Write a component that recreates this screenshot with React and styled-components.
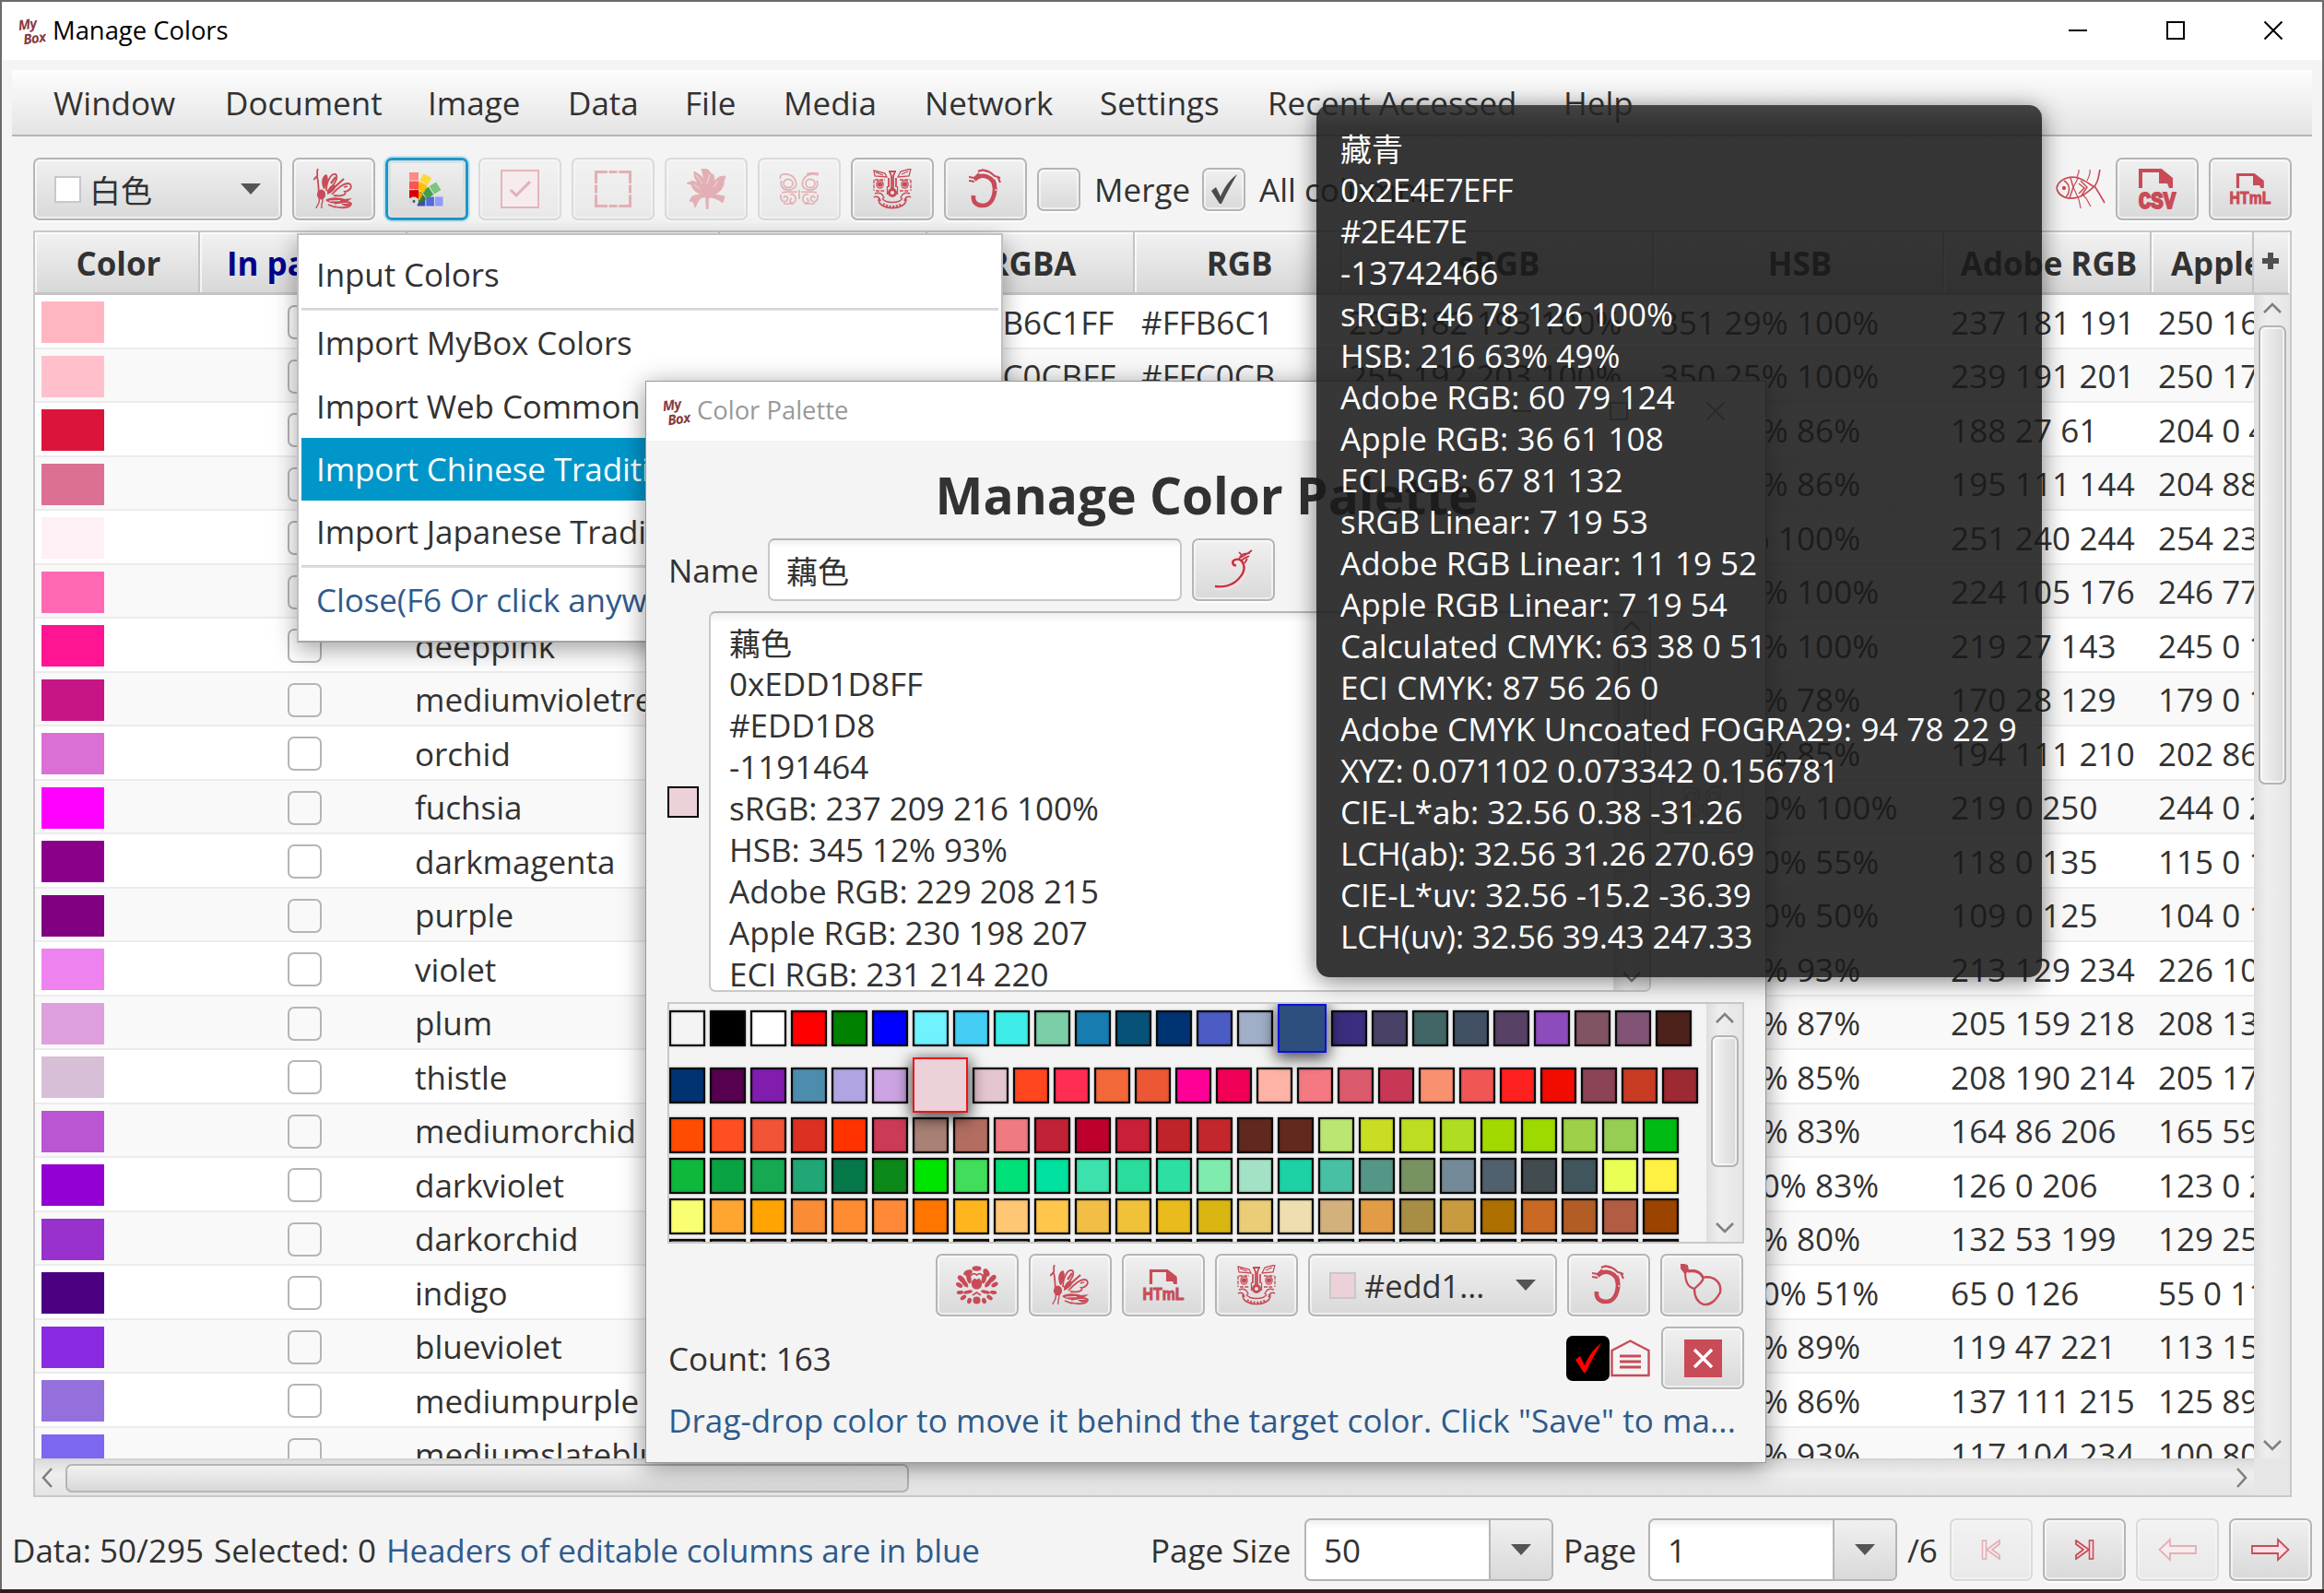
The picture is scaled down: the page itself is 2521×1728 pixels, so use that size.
import React from 'react';
import styled, { createGlobalStyle, css } from 'styled-components';

const INK = '#323232';
const RED = '#c84b57';
const LINK = '#2e5a8c';
const EDGE = '#b5b5b5';
const FONT = `'Open Sans', 'Noto Sans CJK SC', sans-serif`;

const GlobalStyle = createGlobalStyle`
  * { box-sizing: border-box; }
  body {
    margin: 0;
    overflow: hidden;
    font-family: ${FONT};
    font-size: 35px;
    line-height: 46px;
    color: ${INK};
  }
`;

/* ---------- frame ---------- */

const Desktop = styled.div`
  position: relative;
  width: 2521px;
  height: 1728px;
  padding: 2px 2px 4px;
  overflow: hidden;
  background: linear-gradient(to bottom, #6c6a6a 1724px, #35171c 1724px);
`;

const MainWindow = styled.div`
  width: 2517px;
  height: 1722px;
  display: flex;
  flex-direction: column;
  background: #f4f4f4;
`;

const TitleBar = styled.header`
  flex: none;
  height: ${(p) => p.$h}px;
  padding-left: 17px;
  padding-bottom: 1px;
  display: flex;
  align-items: center;
  background: #fff;
  font-size: 27.4px;
  color: ${(p) => p.$color};
`;

const TitleText = styled.span`
  margin-left: 7px;
  padding-bottom: 1px;
  flex: 1;
`;

const LogoBox = styled.span`
  width: 31px;
  display: flex;
  flex-direction: column;
  align-items: center;
  font: italic 700 15px/16px 'Open Sans', sans-serif;
  letter-spacing: -0.6px;
  color: #8a3a40;
  transform: rotate(-8deg);
`;

const LogoTop = styled.span`
  margin-left: -8px;
`;

const LogoBottom = styled.span`
  margin-left: 3px;
`;

const WindowButtons = styled.span`
  display: flex;
  gap: ${(p) => p.$gap}px;
  padding-right: ${(p) => p.$end}px;
`;

const MenuBar = styled.nav`
  flex: none;
  height: 72px;
  margin: 11px 11px 0;
  padding: 2px 0 0 45px;
  display: flex;
  align-items: center;
  background: linear-gradient(#fdfdfd, #e4e4e4);
  border-bottom: 2px solid ${EDGE};
`;

const MenuTitle = styled.span`
  width: ${(p) => p.$w}px;
  white-space: nowrap;
`;

/* ---------- controls ---------- */

const raised = css`
  border: 2px solid ${EDGE};
  border-radius: 7px;
  background: linear-gradient(#f0f0f0, #d9d9d9);
  box-shadow: inset 0 0 0 2px rgba(255, 255, 255, 0.55), 0 2px 0 rgba(255, 255, 255, 0.8);
`;

const IconButton = styled.button`
  ${raised}
  flex: none;
  width: 90px;
  height: 68px;
  padding: 0;
  display: flex;
  align-items: center;
  justify-content: center;
  opacity: ${(p) => (p.$off ? 0.4 : 1)};
  ${(p) =>
    p.$focus &&
    css`
      border: 3px solid #1f98c6;
      box-shadow: 0 0 0 2px #bfe3f1, inset 0 0 0 3px #d9dfe2;
    `}
`;

const ColorCombo = styled.div`
  ${raised}
  flex: none;
  width: 270px;
  height: 68px;
  padding: 0 20px 0 21px;
  display: flex;
  align-items: center;
`;

const ComboSwatch = styled.span`
  width: 29px;
  height: 29px;
  border: 2px solid #c8c8c8;
  background: ${(p) => p.$c};
`;

const ComboText = styled.span`
  flex: 1;
  margin-left: 9px;
  padding-top: ${(p) => p.$drop || 1}px;
  font-size: ${(p) => p.$size || 34.4}px;
`;

const CheckBox = styled.span`
  ${raised}
  flex: none;
  width: 47px;
  height: 47px;
  display: flex;
  align-items: center;
  justify-content: center;
`;

const Toolbar = styled.div`
  flex: none;
  height: 68px;
  margin: 23px 33px 11px 34px;
  display: flex;
  align-items: center;
  gap: 11px;
`;

const ToolLabel = styled.span`
  width: ${(p) => p.$w}px;
  padding-left: 4px;
  padding-top: 1px;
  white-space: nowrap;
`;

const Push = styled.span`
  flex: 1;
`;

/* ---------- table ---------- */

const COLS = '179px 225px 339px 225px 225px 225px 338px 315px 225px 111px';

const Table = styled.section`
  flex: none;
  height: 1374px;
  margin: 0 33px 0 34px;
  border: 2px solid #c8c8c8;
  display: grid;
  grid-template-columns: 2407px 39px;
  grid-template-rows: 68px 1262px 40px;
`;

const HeadRow = styled.div`
  display: grid;
  grid-template-columns: ${COLS};
  border-bottom: 3px solid #c4c4c4;
  overflow: hidden;
`;

const HeadCell = styled.div`
  display: flex;
  align-items: center;
  justify-content: ${(p) => (p.$start ? 'flex-start' : 'center')};
  padding-top: 3px;
  padding-left: ${(p) => (p.$start ? 21 : 4)}px;
  overflow: hidden;
  white-space: nowrap;
  font-weight: 700;
  font-size: 34.9px;
  color: ${(p) => (p.$edit ? '#00008b' : INK)};
  background: linear-gradient(#f2f2f2, #d8d8d8);
  border-right: 2px solid #c4c4c4;
  box-shadow: inset 2px 2px 0 rgba(255, 255, 255, 0.7);
`;

const PlusCell = styled.div`
  display: flex;
  align-items: center;
  justify-content: center;
  padding: 0 2px 4px 0;
  background: linear-gradient(#f2f2f2, #d8d8d8);
  border-right: 2px solid #fafafa;
  border-bottom: 3px solid #c4c4c4;
`;

const Rows = styled.div`
  overflow: hidden;
`;

const Row = styled.div`
  height: 58.5px;
  padding-top: 3px;
  display: grid;
  grid-template-columns: ${COLS};
  align-items: center;
  background: ${(p) => (p.$alt ? '#f9f9f9' : '#fff')};
  border-bottom: 2px solid #ececec;
`;

const Cell = styled.span`
  padding-left: ${(p) => p.$pad || 7}px;
  overflow: hidden;
  white-space: nowrap;
  letter-spacing: ${(p) => p.$ls || 0}px;
`;

const RowSwatch = styled.span`
  width: 68px;
  height: 45px;
  margin-left: 7px;
  background: ${(p) => p.$c};
`;

const RowCheck = styled.span`
  width: 37px;
  height: 37px;
  margin-left: 2px;
  justify-self: center;
  border: 2px solid ${EDGE};
  border-radius: 7px;
`;

/* ---------- scroll bars ---------- */

const VTrack = styled.div`
  width: ${(p) => p.$w || 39}px;
  display: flex;
  flex-direction: column;
  align-items: center;
  justify-content: space-between;
  padding: ${(p) => p.$pad || '8px 0'};
  background: linear-gradient(to right, #dedede, #eeeeee 35%, #e6e6e6);
`;

const VThumb = styled.div`
  width: 30px;
  height: ${(p) => p.$h}px;
  margin-top: ${(p) => p.$top}px;
  margin-bottom: auto;
  border: 2px solid #b4b4b4;
  border-radius: 7px;
  background: linear-gradient(to right, #f3f3f3, #d9d9d9);
  box-shadow: inset 0 0 0 2px rgba(255, 255, 255, 0.6);
`;

const HTrack = styled.div`
  display: flex;
  align-items: center;
  justify-content: space-between;
  padding: 0 7px;
  border-top: 2px solid #d4d4d4;
  background: linear-gradient(#dcdcdc, #eeeeee 40%, #e4e4e4);
`;

const HThumb = styled.div`
  width: 915px;
  height: 31px;
  margin-left: 13px;
  margin-right: auto;
  border: 2px solid #b4b4b4;
  border-radius: 7px;
  background: linear-gradient(#f2f2f2, #d8d8d8);
`;

const Corner = styled.div`
  background: #e6e6e6;
`;

/* ---------- status bar ---------- */

const StatusBar = styled.footer`
  height: 68px;
  margin: 23px 11px 0 11px;
  display: flex;
  align-items: center;
  gap: 11px;
  white-space: nowrap;
`;

const StatusText = styled.span`
  width: ${(p) => p.$w}px;
  padding-top: 2px;
  letter-spacing: ${(p) => (p.$link ? -0.15 : 0)}px;
  color: ${(p) => (p.$link ? LINK : INK)};
`;

const EditCombo = styled.div`
  flex: none;
  width: 270px;
  height: 68px;
  display: flex;
  border: 2px solid ${EDGE};
  border-radius: 7px;
  overflow: hidden;
  background: linear-gradient(#f0f0f0, #ffffff 10px);
`;

const EditComboText = styled.span`
  flex: 1;
  padding-left: 19px;
  line-height: 66px;
`;

const EditComboButton = styled.span`
  width: 68px;
  display: flex;
  align-items: center;
  justify-content: center;
  border-left: 2px solid ${EDGE};
  background: linear-gradient(#f0f0f0, #d9d9d9);
`;

/* ---------- popup menu ---------- */

const Popup = styled.div`
  position: absolute;
  left: 322px;
  top: 253px;
  width: 766px;
  height: 444px;
  padding: 9px 3px;
  border: 2px solid #c0c0c0;
  border-bottom-color: #a4a4a4;
  background: #fff;
  box-shadow: 0 8px 24px rgba(0, 0, 0, 0.35);
`;

const PopupItem = styled.div`
  height: 68.3px;
  padding-left: 16px;
  line-height: 68px;
  white-space: nowrap;
  letter-spacing: -0.1px;
  color: ${(p) => (p.$on ? '#fff' : p.$link ? LINK : INK)};
  background: ${(p) => (p.$on ? '#0096c9' : 'transparent')};
`;

const PopupLine = styled.div`
  height: 3px;
  margin: 2px 0 1px;
  border-top: 1px solid #d0d0d0;
  background: #dedede;
`;

/* ---------- dialog ---------- */

const Dialog = styled.div`
  position: absolute;
  left: 700px;
  top: 413px;
  width: 1216px;
  height: 1174px;
  border: 1px solid #9a9a9a;
  background: #f4f4f4;
  box-shadow: 0 5px 26px rgba(0, 0, 0, 0.42);
`;

const DialogBody = styled.div`
  padding: 10px 23px 0;
  display: flex;
  flex-direction: column;
`;

const Heading = styled.h1`
  height: 96px;
  margin: 0;
  padding-left: 2px;
  text-align: center;
  font-size: 55px;
  font-weight: 700;
  line-height: 97px;
`;

const Line = styled.div`
  display: flex;
  align-items: center;
  justify-content: ${(p) => (p.$end ? 'flex-end' : 'flex-start')};
  gap: 11px;
  margin-right: ${(p) => (p.$end ? 1 : 0)}px;
  margin-bottom: 11px;
`;

const NameLabel = styled.span`
  width: 98px;
  padding: 2px 0 0 1px;
`;

const Input = styled.div`
  width: 449px;
  height: 68px;
  padding-left: 18px;
  line-height: 68px;
  font-size: 34px;
  border: 2px solid #c8c8c8;
  border-top-color: ${EDGE};
  border-radius: 7px;
  background: linear-gradient(#efefef, #fff 8px);
`;

const CurrentSwatch = styled.span`
  flex: none;
  width: 34px;
  height: 34px;
  border: 2px solid #000;
  background: #edd1d8;
`;

const TextArea = styled.div`
  width: 1022px;
  height: 413px;
  display: flex;
  border: 2px solid #c8c8c8;
  border-top-color: ${EDGE};
  border-radius: 7px;
  overflow: hidden;
  background: linear-gradient(#efefef, #fff 10px);
`;

const TextLines = styled.div`
  flex: 1;
  padding: 9px 0 0 20px;
`;

const TextLine = styled.div`
  height: 45px;
  line-height: ${(p) => (p.$cjk ? 48 : 45)}px;
  white-space: pre;
  font-size: ${(p) => (p.$cjk ? 34 : 35)}px;
  letter-spacing: ${(p) => p.$ls || 0}px;
`;

const PalettePane = styled.div`
  height: 262px;
  margin-bottom: 11px;
  display: flex;
  border: 2px solid #c8c8c8;
  overflow: hidden;
`;

const PaletteGrid = styled.div`
  flex: 1;
  display: flex;
  flex-direction: column;
  gap: 5px;
`;

const PaletteRow = styled.div`
  flex: none;
  display: flex;
  align-items: center;
  gap: 5px;
`;

const PaletteCell = styled.span`
  position: relative;
  flex: none;
  width: ${(p) => p.$s || 39}px;
  height: ${(p) => p.$s || 39}px;
  border: 2px solid ${(p) => p.$edge || '#0a0a0a'};
  background: ${(p) => p.$c};
  box-shadow: ${(p) =>
    p.$s ? '0 4px 16px 2px rgba(0, 0, 0, 0.7)' : 'inset 0 0 2px rgba(0, 0, 0, 0.6), 0 0 2px rgba(0, 0, 0, 0.5)'};
  z-index: ${(p) => (p.$s ? 1 : 0)};
`;

const FooterLine = styled.div`
  display: flex;
  align-items: center;
  height: 68px;
`;

const CountText = styled.span`
  padding: 2px 0 0 1px;
`;

const BlackCheck = styled.span`
  width: 47px;
  height: 49px;
  border-radius: 7px;
  background: #000;
  display: flex;
  align-items: center;
  justify-content: center;
`;

const HouseSlot = styled.span`
  display: flex;
  margin: 0 12px 0 1px;
`;

const Message = styled.div`
  margin-top: 11px;
  padding-left: 1px;
  white-space: nowrap;
  color: ${LINK};
  letter-spacing: 0.08px;
`;

/* ---------- tooltip ---------- */

const Tooltip = styled.div`
  position: absolute;
  left: 1428px;
  top: 114px;
  width: 787px;
  height: 946px;
  padding: 24px 26px;
  border-radius: 14px;
  color: #fff;
  background: linear-gradient(rgba(42, 42, 42, 0.87), rgba(25, 25, 25, 0.87) 24px);
  box-shadow: 0 4px 26px rgba(0, 0, 0, 0.5);
`;

/* ---------- icons ---------- */

const Svg = ({ w = 44, h = 44, vb, children, ...rest }) => (
  <svg width={w} height={h} viewBox={vb || `0 0 ${w} ${h}`} fill="none" {...rest}>
    {children}
  </svg>
);

const Logo = () => (
  <LogoBox>
    <LogoTop>My</LogoTop>
    <LogoBottom>Box</LogoBottom>
  </LogoBox>
);

const ChevronSvg = styled.svg`
  flex: none;
`;

const Chevron = ({ dir = 'up' }) => {
  const d = {
    up: 'M2 11 L11 2 L20 11',
    down: 'M2 2 L11 11 L20 2',
    left: 'M11 2 L2 12 L11 22',
    right: 'M2 2 L11 12 L2 22',
  }[dir];
  const flat = dir === 'up' || dir === 'down';
  const w = flat ? 22 : 13;
  const h = flat ? 13 : 24;
  return (
    <ChevronSvg width={w} height={h} viewBox={`0 0 ${w} ${h}`} fill="none">
      <path d={d} stroke="#808080" strokeWidth="2.6" />
    </ChevronSvg>
  );
};

const Triangle = () => (
  <Svg w={24} h={14}>
    <path d="M1 1 H23 L12 13 Z" fill="#545454" />
  </Svg>
);

const Tick = ({ color = '#4c4c4c' }) => (
  <Svg w={34} h={36}>
    <path d="M3 20 L8 16 L13 26 C18 14 24 7 31 2 C25 13 19 23 14 34 H12 Z" fill={color} />
  </Svg>
);

const Minimize = ({ color = '#000' }) => (
  <Svg w={22} h={22}>
    <path d="M1 11 H21" stroke={color} strokeWidth="2" />
  </Svg>
);
const Maximize = ({ color = '#000' }) => (
  <Svg w={22} h={22}>
    <rect x="2" y="2" width="18" height="18" stroke={color} strokeWidth="2" />
  </Svg>
);
const CloseX = ({ color = '#000' }) => (
  <Svg w={22} h={22}>
    <path d="M1.5 1.5 L20.5 20.5 M20.5 1.5 L1.5 20.5" stroke={color} strokeWidth="2" />
  </Svg>
);

const Peacock = () => (
  <Svg>
    <path d="M5 0 C3 3 5 6 4 8 L0 12 M4 9 C6 15 5 20 6 26" stroke={RED} strokeWidth="1.8" />
    <ellipse cx="8.5" cy="28" rx="4.6" ry="5.4" fill={RED} />
    <path d="M6 32 C8 37 3 40 3 43 M10 33 C10 37 8 40 9 43" stroke={RED} strokeWidth="1.4" />
    <path d="M11 22 C7 14 10 7 14 6 C17 9 16 16 12 22 Z" fill={RED} />
    <path d="M14 24 C14 14 19 5 24 6 C28 9 22 19 15 25" stroke={RED} strokeWidth="1.8" />
    <path d="M15 26 C16 19 21 16 24 18 C25 22 20 26 15 28 Z" fill={RED} />
    <path d="M23 20 L33 11 M19 16 L24 9" stroke={RED} strokeWidth="2.2" />
    <path d="M20 28 C25 22 35 13 40 17 C43 21 37 25 34 25 C37 29 28 30 22 29" stroke={RED} strokeWidth="1.8" />
    <path d="M33 20 L37 19" stroke={RED} strokeWidth="1.8" />
    <path d="M13 34 C18 30 28 31 34 33 L42 32 L36 36 C28 38 18 39 13 34 Z" fill={RED} />
    <path d="M23 38 C30 36 38 35 41 38 C40 43 30 43 23 41 M16 39 L24 42" stroke={RED} strokeWidth="1.8" />
    <path d="M30 38 H40 C39 42 33 41 30 38 Z" fill={RED} />
    <path d="M17 35 L29 34.6" stroke="#f3dcdc" strokeWidth="1.2" />
  </Svg>
);

const Fan = () => (
  <Svg w={38} h={38}>
    {[
      [90, ['#8f9bf8', '#5568dd', '#3c4fa8']],
      [58, ['#7cc47f', '#43a047', '#2e7d32']],
      [28, ['#ffd83a', '#ffc107', '#f5a000']],
      [0, ['#ff8a80', '#ff5252', '#d50000']],
    ].map(([a, shades]) => (
      <g key={a} transform={`rotate(${a} 5 32.5)`}>
        {shades.map((c, i) => (
          <rect key={c} x="0" y={1 + i * 9.6} width="10" height="8.6" fill={c} />
        ))}
      </g>
    ))}
    <circle cx="5" cy="32.5" r="5" fill="#d6dbe0" />
    <circle cx="5" cy="32.5" r="1.4" fill="#4c4c4c" />
  </Svg>
);

const CheckSquare = () => (
  <Svg w={42} h={42}>
    <rect x="1" y="1" width="40" height="40" fill="#fbdfe4" stroke={RED} strokeWidth="1.8" />
    <path d="M11 22 L17 28 L32 13" stroke={RED} strokeWidth="3" />
  </Svg>
);

const DashedSquare = () => (
  <Svg w={40} h={40}>
    <path d="M5 1.5 H35 M5 38.5 H35 M1.5 5 V35 M38.5 5 V35" stroke={RED} strokeWidth="3" strokeDasharray="9 1.6" />
    <path d="M1.5 5 V1.5 H5 M35 1.5 H38.5 V5 M38.5 35 V38.5 H35 M5 38.5 H1.5 V35" stroke={RED} strokeWidth="3" />
  </Svg>
);

const Leaf = () => (
  <Svg>
    <path
      d="M22 31 C16 30 14 34 12 38 L10 42 L8 36 L4 35 L7 30 C12 28 16 28 18 27 C12 27 7 23 6 17 L1 16 L7 13 L14 16 C9 11 9 8 9 3 L14 6 C17 8 19 10 20 13 C19 8 18 4 17 0 L24 1 L27 5 C32 7 31 10 30 14 L36 9 L43 8 L41 14 C42 20 36 26 31 28 L42 30 L40 37 C35 33 30 31 25 31 C23 35 25 39 24 44 L22 43 C23 39 21 36 22 31 Z"
      fill={RED}
      stroke={RED}
      strokeWidth="1"
    />
    <path d="M11 7 L18 16 M9 17 L15 22 M35 13 L30 20 M26 6 L23 16" stroke="#f6eaea" strokeWidth="0.7" />
  </Svg>
);

const Mask = () => (
  <Svg w={44} h={36} stroke={RED} strokeWidth="1.7">
    <path d="M2 3 C8 0 16 3 18 9 C20 15 17 19 10 19 C3 19 1 13 3 9 M2 3 L1 7" />
    <ellipse cx="10" cy="12" rx="5" ry="4.6" />
    <path d="M42 3 C36 0 28 3 26 9 C24 15 27 19 34 19 C41 19 43 13 41 9 M42 3 V0 M30 2 C34 0 37 1 42 0" />
    <ellipse cx="34" cy="12" rx="5" ry="4.6" />
    <path d="M3 22 C8 20 14 22 20 21 M41 22 C36 20 30 22 24 21 M22 19 V29" />
    <path d="M2 24 C1 31 6 34 9 30 C11 26 6 24 5 28 M12 24 C18 22 20 30 16 33 C12 35 11 30 14 28 M42 24 C43 31 38 34 35 30 C33 26 38 24 39 28 M32 24 C26 22 24 30 28 33 C32 35 33 30 30 28" />
    <path d="M5 34 H16 M28 34 H39" />
  </Svg>
);

const Tiger = () => (
  <Svg w={42} h={44} stroke={RED} strokeWidth="1.3">
    <path d="M1 2 L13 5 L15 9 L2 8 Z M3 4 L11 7 M41 0 L30 3 L27 9 L39 8 Z M38 3 L31 6" />
    <path d="M2 12 H13 M29 12 H40 M1 12 V24 M41 12 V24 M3 24 H13 M29 24 H39" strokeDasharray="4 1.2" />
    <ellipse cx="7.5" cy="17" rx="3.6" ry="4.2" />
    <circle cx="7.5" cy="17" r="2" fill={RED} />
    <ellipse cx="34.5" cy="17" rx="3.6" ry="4.2" />
    <circle cx="34.5" cy="17" r="2" fill={RED} />
    <path d="M17 3 H25 M18 3 L20 8 V22 M24 3 L22 8 V22 M17 10 V20 M25 10 V20" strokeWidth="1.8" />
    <circle cx="21" cy="26" r="3.6" strokeWidth="3" />
    <path d="M15.500 19 V28 M26.500 19 V28" />
    <path d="M2 27 C7 25 11 27 12 32 M40 27 C35 25 31 27 30 32 M1 31 C4 29 7 31 8 35 M41 31 C38 29 35 31 34 35" strokeWidth="1.6" />
    <path d="M6 33 C6 46 36 46 36 33 M10 32 C13 38 29 38 32 32" strokeWidth="1.6" />
    <path d="M11 38 C16 42 26 42 31 38" strokeDasharray="2 1.6" strokeWidth="2.2" />
  </Svg>
);

const Dragon = () => (
  <Svg w={36} h={44}>
    <path d="M6 12 C14 4 27 8 28 21 C28 34 22 40 15 40 C8 40 4 36 5 29" stroke={RED} strokeWidth="4.6" />
    <path d="M0 9 L6 10 L11 5 M0 13 L6 14 M10 3 C18 -1 24 4 28 8 L34 10 M14 1 L20 3 M31 8 L34 15" stroke={RED} strokeWidth="2" />
    <path d="M27 12 C30 18 29 26 28 28" stroke={RED} strokeWidth="3" />
    <path d="M29 22 V24" stroke="#f5e4e4" strokeWidth="1.2" />
  </Svg>
);

const Gourd = () => (
  <Svg w={46} h={46}>
    <path d="M1 0 L7 2 L8 7 L5 10 L1 5 Z" fill={RED} stroke={RED} strokeWidth="2" />
    <path d="M5 8 C12 7 19 5 24 14 C26 17 22 21 15 27 C8 25 5 20 5 8 Z" stroke={RED} strokeWidth="2.2" />
    <path d="M23 15 C36 12 45 20 43 31 C39 38 34 45 25 44 C17 41 15 34 15 27" stroke={RED} strokeWidth="2.4" />
    <path d="M8 8 C15 7 21 8 24 14" stroke={RED} strokeWidth="3" />
  </Svg>
);

const PETALS = [
  [22.5, 3, 5, 2.8, 0], [13, 7.5, 5, 3, -20], [33, 7.5, 4.6, 3, 60],
  [6, 14.5, 2.8, 5, -45], [39.5, 14, 2.8, 5, 45], [3.6, 21, 2.4, 4, -60], [42, 20.5, 2.4, 4, 60],
  [14, 13.5, 2.6, 6, -12], [30.5, 13.5, 2.6, 6, 12], [9.5, 19, 2.4, 5.4, -38], [35, 19, 2.4, 5.4, 38],
  [4.5, 29, 3.8, 1.9, -8], [40.5, 29, 3.8, 1.9, 8], [13, 28.5, 5, 1.8, -12], [32, 28.5, 5, 1.8, 12],
  [8, 34.5, 3.6, 2.2, -35], [36.5, 34.5, 3.6, 2.2, 35], [14.5, 38, 2.4, 3.2, 15], [30.5, 38, 2.4, 3.2, -15],
  [22.5, 37.5, 4, 4, 0],
];

const Flower = () => (
  <Svg w={46} h={42} fill={RED}>
    {PETALS.map(([x, y, rx, ry, a], i) => (
      <ellipse key={i} cx={x} cy={y} rx={rx} ry={ry} transform={`rotate(${a} ${x} ${y})`} fill={RED} />
    ))}
    <path d="M17 17 L20 13.5 L22.5 15 L25 13.500 L28 17 C29 23 26 25.500 22.5 25.500 C19 25.500 16 23 17 17 Z" fill={RED} />
    <path d="M16 11 C18 8 20 8 22.5 10 C25 8 27 8 29 11" fill="none" stroke={RED} strokeWidth="1.8" />
    <path d="M18 32 L22.5 29 L27 32" fill="none" stroke={RED} strokeWidth="1.6" />
  </Svg>
);

const Phoenix = () => (
  <Svg>
    <path d="M26 19 C19 20 17 13 22 11 C31 6 39 17 33 28 C27 38 16 43 2 41" stroke="#f6dfe3" strokeWidth="6" />
    <path d="M25 17 C21 18 20 13 23 11.500 C31 8 36 17 32 26 C26 36 17 42 2 40" stroke="#c2303f" strokeWidth="2.4" />
    <path d="M28 11 C29 6 32 4 40 4 M30 9 C33 6 36 6 42 1 M31 12 C33 9 36 9 39 7 M34 15 L37 10 M28 3 L31 6" stroke="#c2303f" strokeWidth="1.7" />
  </Svg>
);

const Fish = () => (
  <Svg w={54} h={44} stroke={RED} strokeWidth="1.7">
    <path d="M1 21 C3 12 14 7 24 10 C34 13 40 20 42 19 C47 13 46 8 48 1 M1 21 C3 31 14 34 24 31 C32 29 38 22 42 19 C47 26 50 32 53 37" />
    <circle cx="9" cy="21" r="1.3" fill={RED} />
    <path d="M9 13 C16 17 16 25 11 31 M16 10 L19 20 L15 32 M25 16 L31 21 L25 27 M27 13 L34 20 L28 29" strokeWidth="1.5" />
    <path d="M23 9 L25 4 V1 M34 13 C36 9 38 5 37 1 M24 31 C26 35 26 39 27 43 M30 29 C35 33 35 37 38 41 M19 20 L24 31 M19 20 L25 9" strokeWidth="1.2" />
  </Svg>
);

const FileLabel = ({ wide }) => (
  <Svg w={46} h={44} overflow="visible">
    {wide ? (
      <>
        <path d="M9.5 21 V6.5 H27 L36 13.5 V21" stroke={RED} strokeWidth="3.2" />
        <path d="M26 5 L37.6 14 V21 H34.5 L33 18 H26 Z" fill={RED} />
        <text x="0.500" y="37.500" fill={RED} fontFamily="Liberation Sans, sans-serif" fontWeight="700" fontSize="18.500" textLength="45" lengthAdjust="spacingAndGlyphs" stroke={RED} strokeWidth="0.9">
          HTmL
        </text>
      </>
    ) : (
      <>
        <path d="M5 21 V2 H27 L38 11 V21" stroke={RED} strokeWidth="4" />
        <path d="M25 1 L40 11 V21 H36 L34 16 H25 Z" fill={RED} />
        <text x="3" y="43" fill={RED} fontFamily="Liberation Mono, monospace" fontWeight="700" fontSize="26" textLength="40" lengthAdjust="spacingAndGlyphs" stroke={RED} strokeWidth="2">
          CSV
        </text>
      </>
    )}
  </Svg>
);

const House = () => (
  <Svg w={43} h={42} stroke={RED} strokeWidth="2.4">
    <path d="M1.5 40 V13 L21.5 2.5 L41.5 13 V40 Z" />
    <path d="M10 19 H33 M10 25 H33 M10 31 H33" strokeWidth="2.8" />
  </Svg>
);

const RedClose = () => (
  <Svg w={41} h={41}>
    <rect width="41" height="41" fill={RED} />
    <path d="M11 11 L30 30 M30 11 L11 30" stroke="#fff" strokeWidth="3.4" />
  </Svg>
);

const Arrow = ({ flip }) => (
  <Svg w={42} h={26} transform={flip ? 'scale(-1 1)' : undefined}>
    <path d="M1 9 H29 V2 L40.5 13 L29 24 V17 H1 Z" fill="#fbdfe4" stroke={RED} strokeWidth="1.8" />
  </Svg>
);

const Jump = ({ flip }) => (
  <Svg w={22} h={22} transform={flip ? 'scale(-1 1)' : undefined}>
    <path d="M2 1 L16 11 L2 21 V17 L10 11 L2 5 Z" fill="#fbdfe4" stroke={RED} strokeWidth="1.8" />
    <rect x="16.5" y="1" width="4" height="20" fill="#fbdfe4" stroke={RED} strokeWidth="1.6" />
  </Svg>
);

const Plus = () => (
  <Svg w={18} h={18}>
    <path d="M9 0 V18 M0 9 H18" stroke="#505050" strokeWidth="6" />
  </Svg>
);

/* ---------- data ---------- */

const MENUS = [
  ['Window', 186], ['Document', 220], ['Image', 152], ['Data', 127], ['File', 107],
  ['Media', 153], ['Network', 190], ['Settings', 182], ['Recent Accessed', 321], ['Help', 100],
];

const COLORS = [
  ['lightpink', 'FFB6C1', '351 29% 100%', '237 181 191', '250 164 177'],
  ['pink', 'FFC0CB', '350 25% 100%', '239 191 201', '250 176 188'],
  ['crimson', 'DC143C', '348 91% 86%', '188 27 61', '204 0 43'],
  ['palevioletred', 'DB7093', '340 49% 86%', '195 111 144', '204 88 123'],
  ['lavenderblush', 'FFF0F5', '340 6% 100%', '251 240 244', '254 236 243'],
  ['hotpink', 'FF69B4', '330 59% 100%', '224 105 176', '246 77 160'],
  ['deeppink', 'FF1493', '328 92% 100%', '219 27 143', '245 0 124'],
  ['mediumvioletred', 'C71585', '322 89% 78%', '170 28 129', '179 0 110'],
  ['orchid', 'DA70D6', '302 49% 85%', '194 111 210', '202 86 205'],
  ['fuchsia', 'FF00FF', '300 100% 100%', '219 0 250', '244 0 250'],
  ['darkmagenta', '8B008B', '300 100% 55%', '118 0 135', '115 0 116'],
  ['purple', '800080', '300 100% 50%', '109 0 125', '104 0 105'],
  ['violet', 'EE82EE', '300 45% 93%', '213 129 234', '226 106 232'],
  ['plum', 'DDA0DD', '300 28% 87%', '205 159 218', '208 138 213'],
  ['thistle', 'D8BFD8', '300 12% 85%', '208 190 214', '205 175 208'],
  ['mediumorchid', 'BA55D3', '288 60% 83%', '164 86 206', '165 59 202'],
  ['darkviolet', '9400D3', '282 100% 83%', '126 0 206', '123 0 201'],
  ['darkorchid', '9932CC', '280 75% 80%', '132 53 199', '129 25 193'],
  ['indigo', '4B0082', '275 100% 51%', '65 0 126', '55 0 117'],
  ['blueviolet', '8A2BE2', '271 81% 89%', '119 47 221', '113 15 218'],
  ['mediumpurple', '9370DB', '260 49% 86%', '137 111 215', '125 89 211'],
  ['mediumslateblue', '7B68EE', '249 56% 93%', '117 104 234', '100 80 232'],
];

const toRgb = (hex) => [0, 2, 4].map((i) => parseInt(hex.slice(i, i + 2), 16)).join(' ');

const PALETTE = [
  'f4f4f4 000000 ffffff ff0000 008000 0000ff 70f3ff 44cef6 3eede7 7bcfa6 177cb0 065279 003371 4b5cc4 a1afc9 2e4e7e 3b2e7e 4a4266 426666 425066 574266 8d4bbb 815463 815476 4c221b',
  '003371 56004f 801dae 4c8dae b0a4e3 cca4e3 edd1d8 e4c6d0 ff461f ff2d51 f36838 ed5736 ff0097 f00056 ffb3a7 f47983 db5a6b c93756 f9906f f05654 ff2121 f20c00 8c4356 c83c23 9d2933',
  'ff4c00 ff4e20 f35336 dc3023 ff3300 cb3a56 a98175 b36d61 ef7a82 c32136 be002f c91f37 bf242a c3272b 60281e 622a1d bce672 c9dd22 bddd22 afdd22 a3d900 9ed900 9ed048 96ce54 00bc12',
  '0eb83a 0aa344 16a951 21a675 057748 0c8918 00e500 40de5a 00e079 00e09e 3de1ad 2add9c 2edfa3 7fecad a4e2c6 1bd1a5 48c0a3 549688 789262 758a99 50616d 424c50 41555d eaff56 fff143',
  'faff72 ffa631 ffa400 fa8c35 ff8c31 ff8936 ff7500 ffb61e ffc773 ffc64b f2be45 f0c239 e9bb1d d9b611 eacd76 eedeb0 d3b17d e29c45 a78e44 c89b40 ae7000 ca6924 b25d25 b35c44 9b4400',
  '955539 8c4b31 845a33 896c39 827100 6e511e 7c4b00 60281e 808080 75664d 5d513c 665757 493131 41555d 392f41 50616d 758a99 a29b7c 7397ab 395260 424b50 88ada6 6b6882 725e82 3d3b4f',
].map((line) => line.split(' '));

const SPECIAL = { '2e4e7e': [53, '#0b10e0'], edd1d8: [60, '#ee1515'] };

const AREA = ['藕色', '0xEDD1D8FF', '#EDD1D8', '-1191464', 'sRGB: 237 209 216 100%', 'HSB: 345 12% 93%', 'Adobe RGB: 229 208 215', 'Apple RGB: 230 198 207', 'ECI RGB: 231 214 220'];

const TIP = [
  ['藏青'], ['0x2E4E7EFF', -0.6], ['#2E4E7E', -0.5], ['-13742466'], ['sRGB: 46 78 126 100%'], ['HSB: 216 63% 49%', 0.1],
  ['Adobe RGB: 60 79 124', 0.1], ['Apple RGB: 36 61 108', 0.1], ['ECI RGB: 67 81 132'], ['sRGB Linear: 7 19 53'],
  ['Adobe RGB Linear: 11 19 52'], ['Apple RGB Linear: 7 19 54'], ['Calculated CMYK: 63 38 0 51', 0.1],
  ['ECI CMYK: 87 56 26 0', 0.25], ['Adobe CMYK Uncoated FOGRA29: 94 78 22 9', 0.22], ['XYZ: 0.071102 0.073342 0.156781', -0.1],
  ['CIE-L*ab: 32.56 0.38 -31.26'], ['LCH(ab): 32.56 31.26 270.69', -0.1], ['CIE-L*uv: 32.56 -15.2 -36.39'], ['LCH(uv): 32.56 39.43 247.33', -0.1],
];

/* ---------- sections ---------- */

const MainToolbar = () => (
  <Toolbar>
    <ColorCombo>
      <ComboSwatch $c="#fff" />
      <ComboText $size={34} $drop={3}>白色</ComboText>
      <Triangle />
    </ColorCombo>
    <IconButton><Peacock /></IconButton>
    <IconButton $focus><Fan /></IconButton>
    <IconButton $off><CheckSquare /></IconButton>
    <IconButton $off><DashedSquare /></IconButton>
    <IconButton $off><Leaf /></IconButton>
    <IconButton $off><Mask /></IconButton>
    <IconButton><Tiger /></IconButton>
    <IconButton><Dragon /></IconButton>
    <CheckBox />
    <ToolLabel $w={110}>Merge</ToolLabel>
    <CheckBox><Tick /></CheckBox>
    <ToolLabel $w={200}>All columns</ToolLabel>
    <Push />
    <Fish />
    <IconButton><FileLabel /></IconButton>
    <IconButton><FileLabel wide /></IconButton>
  </Toolbar>
);

const ColorTable = () => (
  <Table>
    <HeadRow>
      <HeadCell>Color</HeadCell>
      <HeadCell $edit>In palette</HeadCell>
      <HeadCell />
      <HeadCell />
      <HeadCell>RGBA</HeadCell>
      <HeadCell>RGB</HeadCell>
      <HeadCell>sRGB</HeadCell>
      <HeadCell>HSB</HeadCell>
      <HeadCell>Adobe RGB</HeadCell>
      <HeadCell $start>Apple RGB</HeadCell>
    </HeadRow>
    <PlusCell><Plus /></PlusCell>
    <Rows>
      {COLORS.map(([name, hex, hsb, adobe, apple], i) => (
        <Row key={name} $alt={i % 2 === 1}>
          <RowSwatch $c={`#${hex}`} />
          <RowCheck />
          <Cell $pad={8}>{name}</Cell>
          <Cell />
          <Cell>0x{hex}FF</Cell>
          <Cell>#{hex}</Cell>
          <Cell>{toRgb(hex)} 100%</Cell>
          <Cell $ls={0.1}>{hsb}</Cell>
          <Cell $ls={0.15}>{adobe}</Cell>
          <Cell>{apple}</Cell>
        </Row>
      ))}
    </Rows>
    <VTrack>
      <Chevron dir="up" />
      <VThumb $h={498} $top={12} />
      <Chevron dir="down" />
    </VTrack>
    <HTrack>
      <Chevron dir="left" />
      <HThumb />
      <Chevron dir="right" />
    </HTrack>
    <Corner />
  </Table>
);

const Status = () => (
  <StatusBar>
    <StatusText>Data: 50/295</StatusText>
    <StatusText>Selected: 0</StatusText>
    <StatusText $link>Headers of editable columns are in blue</StatusText>
    <Push />
    <StatusText $w={156}>Page Size</StatusText>
    <EditCombo>
      <EditComboText>50</EditComboText>
      <EditComboButton><Triangle /></EditComboButton>
    </EditCombo>
    <StatusText $w={81}>Page</StatusText>
    <EditCombo>
      <EditComboText>1</EditComboText>
      <EditComboButton><Triangle /></EditComboButton>
    </EditCombo>
    <StatusText $w={35}>/6</StatusText>
    <IconButton $off><Jump flip /></IconButton>
    <IconButton><Jump /></IconButton>
    <IconButton $off><Arrow flip /></IconButton>
    <IconButton><Arrow /></IconButton>
  </StatusBar>
);

const ImportMenu = () => (
  <Popup>
    <PopupItem>Input Colors</PopupItem>
    <PopupLine />
    <PopupItem>Import MyBox Colors</PopupItem>
    <PopupItem>Import Web Common Colors</PopupItem>
    <PopupItem $on>Import Chinese Traditional Colors</PopupItem>
    <PopupItem>Import Japanese Traditional Colors</PopupItem>
    <PopupLine />
    <PopupItem $link>Close(F6 Or click anywhere)</PopupItem>
  </Popup>
);

const PaletteDialog = () => (
  <Dialog>
    <TitleBar $h={64} $color="#999">
      <Logo />
      <TitleText>Color Palette</TitleText>
      <WindowButtons $gap={83} $end={43}>
        <Minimize color="#999" />
        <Maximize color="#999" />
        <CloseX color="#999" />
      </WindowButtons>
    </TitleBar>
    <DialogBody>
      <Heading>Manage Color Palette</Heading>
      <Line>
        <NameLabel>Name</NameLabel>
        <Input>藕色</Input>
        <IconButton><Phoenix /></IconButton>
      </Line>
      <Line>
        <CurrentSwatch />
        <TextArea>
          <TextLines>
            {AREA.map((t, i) => (
              <TextLine key={t} $cjk={i === 0}>{t}</TextLine>
            ))}
          </TextLines>
          <VTrack>
            <Chevron dir="up" />
            <VThumb $h={150} $top={10} />
            <Chevron dir="down" />
          </VTrack>
        </TextArea>
        <IconButton $off><Mask /></IconButton>
      </Line>
      <PalettePane>
        <PaletteGrid>
          {PALETTE.map((row, r) => (
            <PaletteRow key={r}>
              {row.map((c) => {
                const [size, edge] = SPECIAL[c] || [];
                return <PaletteCell key={c} $c={`#${c}`} $s={size} $edge={edge} />;
              })}
            </PaletteRow>
          ))}
        </PaletteGrid>
        <VTrack $pad="9px 0">
          <Chevron dir="up" />
          <VThumb $h={143} $top={12} />
          <Chevron dir="down" />
        </VTrack>
      </PalettePane>
      <Line $end>
        <IconButton><Flower /></IconButton>
        <IconButton><Peacock /></IconButton>
        <IconButton><FileLabel wide /></IconButton>
        <IconButton><Tiger /></IconButton>
        <ColorCombo>
          <ComboSwatch $c="#edd1d8" />
          <ComboText>#edd1...</ComboText>
          <Triangle />
        </ColorCombo>
        <IconButton><Dragon /></IconButton>
        <IconButton><Gourd /></IconButton>
      </Line>
      <FooterLine>
        <CountText>Count: 163</CountText>
        <Push />
        <BlackCheck><Tick color="#ff0000" /></BlackCheck>
        <HouseSlot><House /></HouseSlot>
        <IconButton><RedClose /></IconButton>
      </FooterLine>
      <Message>Drag-drop color to move it behind the target color. Click "Save" to ma...</Message>
    </DialogBody>
  </Dialog>
);

export default function App() {
  return (
    <>
      <GlobalStyle />
      <Desktop>
        <MainWindow>
          <TitleBar $h={63} $color="#000">
            <Logo />
            <TitleText>Manage Colors</TitleText>
            <WindowButtons $gap={84} $end={42}>
              <Minimize />
              <Maximize />
              <CloseX />
            </WindowButtons>
          </TitleBar>
          <MenuBar>
            {MENUS.map(([label, w]) => (
              <MenuTitle key={label} $w={w}>{label}</MenuTitle>
            ))}
          </MenuBar>
          <MainToolbar />
          <ColorTable />
          <Status />
        </MainWindow>
        <ImportMenu />
        <PaletteDialog />
        <Tooltip>
          {TIP.map(([t, ls], i) => (
            <TextLine key={t} $cjk={i === 0} $ls={ls}>{t}</TextLine>
          ))}
        </Tooltip>
      </Desktop>
    </>
  );
}
